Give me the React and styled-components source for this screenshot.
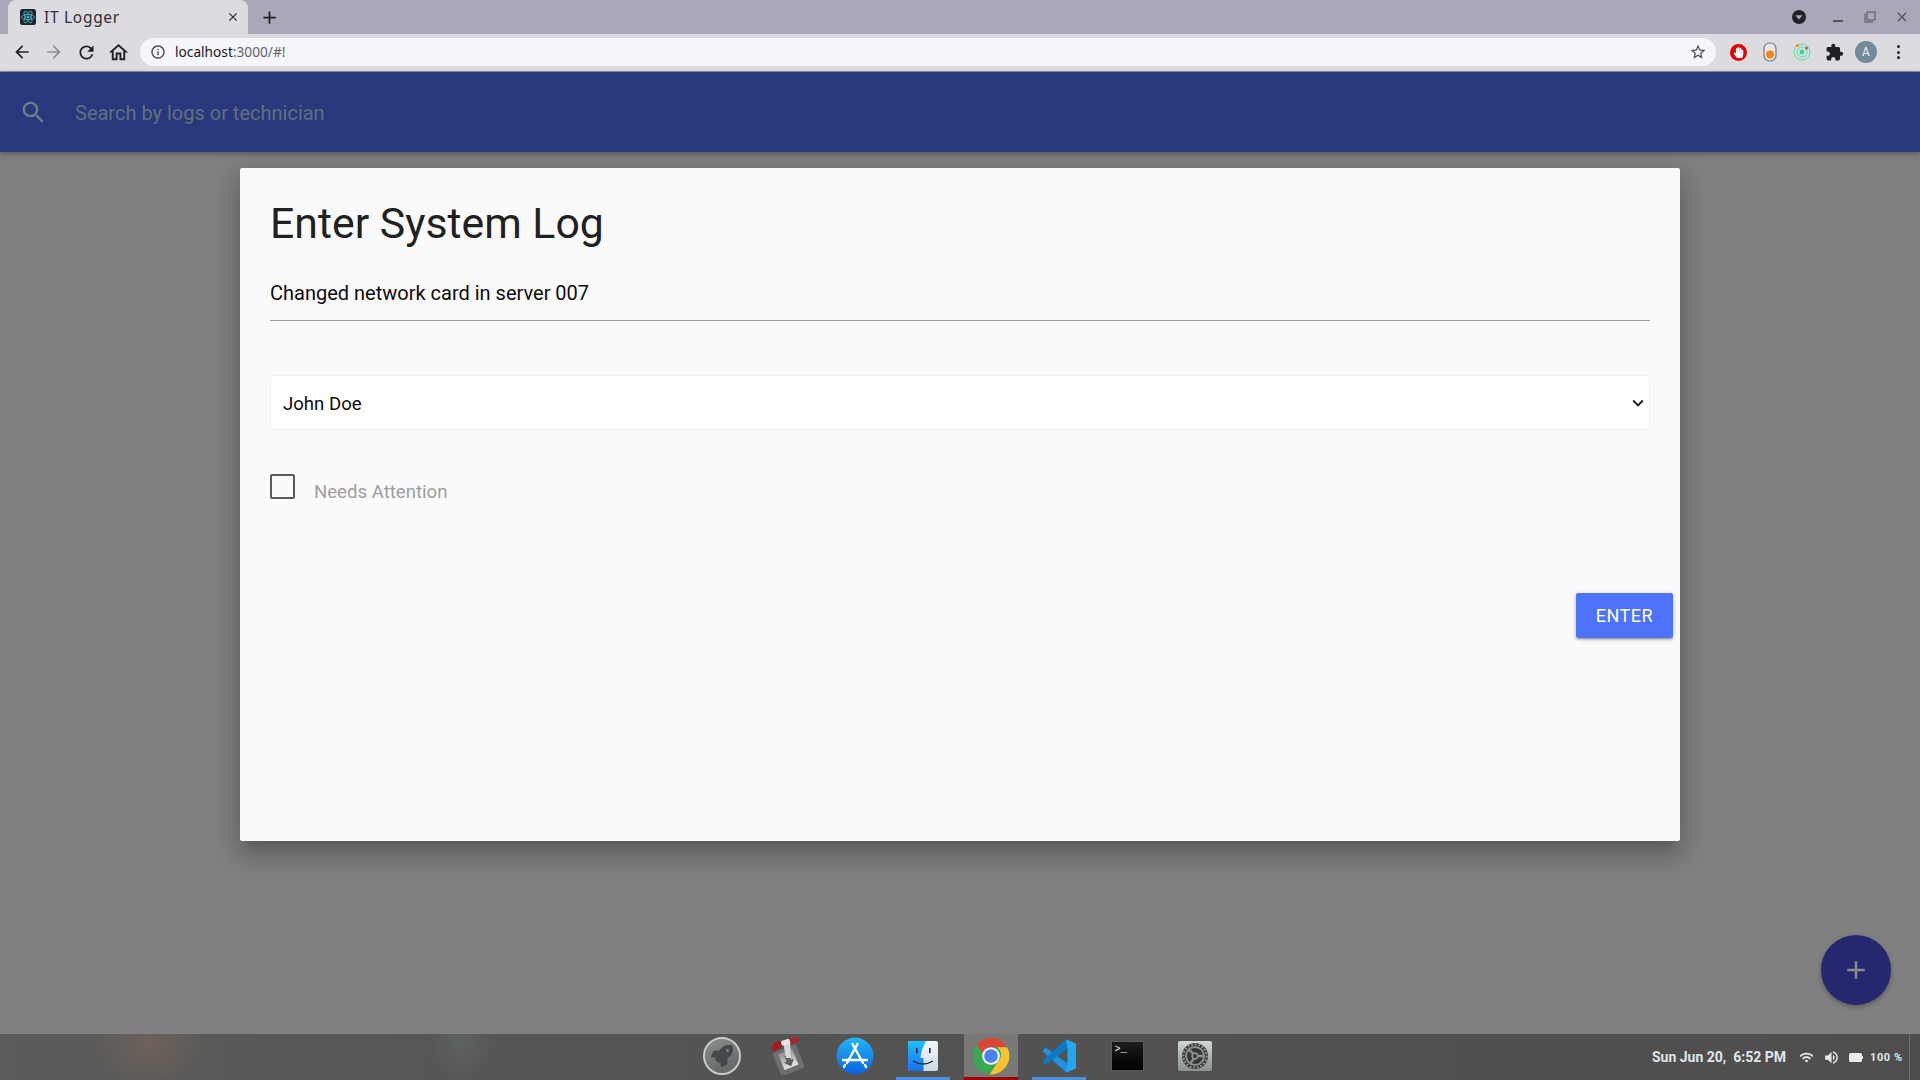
import React from 'react'
import styled, { createGlobalStyle } from 'styled-components'
import {
    MdArrowBack, MdArrowForward, MdRefresh, MdOutlineHome, MdInfoOutline, MdStarBorder,
    MdExtension, MdSearch, MdAdd, MdClose, MdKeyboardArrowDown,
    MdFilterNone, MdVolumeUp, MdWifi,
} from 'react-icons/md'
import { FaHandPaper, FaRocket } from 'react-icons/fa'

const GlobalStyle = createGlobalStyle`
    html, body { margin: 0; padding: 0; height: 100%; overflow: hidden; }
    body { font-family: Roboto, "Liberation Sans", sans-serif; background: #808080; }
    * { box-sizing: border-box; }
`

const ReactFavicon = () => (
    <svg width="16" height="16" viewBox="0 0 16 16">
        <rect width="16" height="16" rx="2.5" fill="#20232a" />
        <g fill="none" stroke="#3fb8d8" strokeWidth="0.8">
            <ellipse cx="8" cy="8" rx="6.6" ry="2.6" />
            <ellipse cx="8" cy="8" rx="6.6" ry="2.6" transform="rotate(60 8 8)" />
            <ellipse cx="8" cy="8" rx="6.6" ry="2.6" transform="rotate(120 8 8)" />
        </g>
        <circle cx="8" cy="8" r="1.4" fill="#3fb8d8" />
    </svg>
)

const ProfileDot = () => (
    <svg width="14" height="14" viewBox="0 0 14 14">
        <circle cx="7" cy="7" r="7" fill="#202124" />
        <path d="M3.4 5.2h7.2L7 9.6z" fill="#a9a8b8" />
    </svg>
)

const Minimize = () => (
    <svg width="12" height="12" viewBox="0 0 12 12"><rect x="1" y="9" width="10" height="2" fill="#55555c" /></svg>
)

const ToggleExt = () => (
    <svg width="14" height="20" viewBox="0 0 14 20">
        <rect x="1" y="1" width="12" height="18" rx="5.5" fill="#e8e8e8" stroke="#77787c" strokeWidth="1.2" />
        <circle cx="7" cy="12.5" r="4" fill="#f5860f" />
    </svg>
)

const RadarExt = () => (
    <svg width="18" height="18" viewBox="0 0 18 18">
        <g fill="none" stroke="#4fe8a6" strokeWidth="1">
            <circle cx="9" cy="9" r="8" />
            <circle cx="9" cy="9" r="5" />
        </g>
        <circle cx="9" cy="9" r="2.4" fill="#2fd79a" />
        <circle cx="4.5" cy="2.5" r="1.5" fill="#f08a24" />
        <circle cx="13.5" cy="5" r="1.5" fill="#e8503a" />
    </svg>
)

const TransmissionIcon = () => (
    <svg width="33" height="38" viewBox="0 0 33 38">
        <defs>
            <linearGradient id="transInner" x1="0" y1="0" x2="0" y2="1">
                <stop offset="0" stopColor="#8f8f8f" />
                <stop offset="1" stopColor="#e6e6e6" />
            </linearGradient>
        </defs>
        <g transform="rotate(-22 17 23)">
            <rect x="5" y="11" width="25" height="25" rx="2" fill="#6f6f6f" />
            <rect x="10" y="14" width="15" height="17" fill="url(#transInner)" />
            <path d="M15 18 h5 v6 h3 l-5.5 6 l-5.5 -6 h3z" fill="#5f5f5f" />
        </g>
        <path d="M12 5 L19 4 L20 21 L15 21 Z" fill="#d6d6d6" />
        <path d="M0.5 11 Q1 6 8 4 L11 4 L13 8 L6 13 Q2 15 0.5 11z" fill="#a51a1e" />
        <path d="M18 1.5 L26 0.5 Q30 1 28 4 L20 7 Z" fill="#b81f24" />
        <rect x="10" y="3" width="9" height="5" rx="1.5" fill="#e6e6e6" transform="rotate(-16 14 5)" />
    </svg>
)

const AppStoreIcon = () => (
    <svg width="38" height="38" viewBox="0 0 38 38">
        <defs>
            <linearGradient id="appstore" x1="0" y1="0" x2="0" y2="1">
                <stop offset="0" stopColor="#23b6f7" />
                <stop offset="1" stopColor="#0c62e0" />
            </linearGradient>
        </defs>
        <circle cx="19" cy="19" r="18.5" fill="url(#appstore)" />
        <g stroke="#fff" strokeWidth="2.4" strokeLinecap="round" fill="none">
            <path d="M21.5 7 L11 26" />
            <path d="M16.5 7 L27 26" />
            <path d="M7 23 H31" />
            <path d="M9 28 L8 30" />
            <path d="M29 28 L30 30" />
        </g>
    </svg>
)

const FinderIcon = () => (
    <svg width="30" height="30" viewBox="0 0 30 30">
        <defs>
            <linearGradient id="finderBlue" x1="0" y1="0" x2="0" y2="1">
                <stop offset="0" stopColor="#1ec0fa" />
                <stop offset="1" stopColor="#1a6ff0" />
            </linearGradient>
            <linearGradient id="finderWhite" x1="0" y1="0" x2="0" y2="1">
                <stop offset="0" stopColor="#f4f7fa" />
                <stop offset="1" stopColor="#ccd8e4" />
            </linearGradient>
        </defs>
        <rect width="30" height="30" rx="2" fill="url(#finderWhite)" />
        <path d="M2 0 H18 Q13 9 12.5 17 H15.5 V30 H2 Q0 30 0 28 V2 Q0 0 2 0z" fill="url(#finderBlue)" />
        <rect x="8" y="7" width="1.6" height="5" fill="#1b2a3a" />
        <rect x="21" y="7" width="1.6" height="5" fill="#1b2a3a" />
        <path d="M5 20 Q15 26 25 20" stroke="#1b2a3a" strokeWidth="1.3" fill="none" />
    </svg>
)

const ChromeIcon = () => (
    <svg width="38" height="38" viewBox="0 0 24 24">
        <circle cx="12" cy="12" r="11.6" fill="#37a853" />
        <path d="M12 .4A11.6 11.6 0 0 1 22.1 6.4H12a5.6 5.6 0 0 0-5.3 3.8L2.9 4.9A11.6 11.6 0 0 1 12 .4z" fill="#dc4437" />
        <path d="M22.1 6.4A11.6 11.6 0 0 1 11.2 23.6l5.2-8.2a5.6 5.6 0 0 0-.7-9z" fill="#f7c42e" />
        <circle cx="12" cy="12" r="5.6" fill="#f2f2f2" />
        <circle cx="12" cy="12" r="4.3" fill="#4a84ea" />
    </svg>
)

const VsCodeIcon = () => (
    <svg width="34" height="34" viewBox="0 0 100 100">
        <path d="M72 99 L2 36 L9 24 L30 38 L76 73 Z" fill="#1c93e8" />
        <path d="M72 1 L2 64 L9 76 L30 62 L76 27 Z" fill="#0f78c6" />
        <path d="M70 1 L100 13 V87 L70 99 L75 73 V27 Z" fill="#24a6f4" />
    </svg>
)

const SettingsIcon = () => (
    <svg width="34" height="30" viewBox="0 0 34 30">
        <defs>
            <linearGradient id="settingsTile" x1="0" y1="0" x2="0" y2="1">
                <stop offset="0" stopColor="#d2d7d7" />
                <stop offset="1" stopColor="#899090" />
            </linearGradient>
        </defs>
        <rect width="34" height="30" rx="2" fill="url(#settingsTile)" />
        <circle cx="17" cy="15" r="13" fill="#333738" />
        <circle cx="17" cy="15" r="11.6" fill="none" stroke="#8d9090" strokeWidth="2" strokeDasharray="2 1.6" />
        <circle cx="17" cy="15" r="9" fill="none" stroke="#8d9090" strokeWidth="2" />
        <circle cx="17" cy="15" r="2.8" fill="#333738" stroke="#8d9090" strokeWidth="1.8" />
        <g stroke="#8d9090" strokeWidth="2.4">
            <path d="M15.4 12.6 L10 8" />
            <path d="M19.8 15 L26 15" />
            <path d="M15.8 17.6 L12 23" />
        </g>
    </svg>
)

const BatteryIcon = () => (
    <svg width="14" height="9" viewBox="0 0 14 9">
        <rect width="13" height="9" rx="1.5" fill="#e8eaee" />
        <rect x="13" y="3" width="1" height="3" fill="#e8eaee" />
    </svg>
)

const Screen = styled.div`
    width: 1920px;
    height: 1080px;
    display: flex;
    flex-direction: column;
    overflow: hidden;
`

const TabStrip = styled.div`
    height: 34px;
    background: #a9a8b8;
    display: flex;
    align-items: flex-end;
    padding-left: 8px;
`

const Tab = styled.div`
    width: 240px;
    height: 34px;
    background: #dcdbe0;
    border-radius: 8px 8px 0 0;
    display: flex;
    align-items: center;
    padding: 0 8px 0 12px;
`

const TabTitle = styled.span`
    flex: 1;
    margin-left: 8px;
    padding-bottom: 1px;
    font-family: "Noto Sans", sans-serif;
    font-size: 15.5px;
    letter-spacing: 0.7px;
    color: #303036;
`

const NewTab = styled.div`
    width: 42px;
    height: 34px;
    display: flex;
    align-items: center;
    justify-content: center;
    color: #202124;
`

const WindowControls = styled.div`
    margin-left: auto;
    height: 34px;
    display: flex;
    align-items: center;
    padding-right: 2px;
    color: #55555c;
`

const WindowButton = styled.div`
    width: 32px;
    height: 34px;
    display: flex;
    align-items: center;
    justify-content: center;
`

const ProfileSlot = styled.div`
    display: flex;
    margin-right: 16px;
`

const Toolbar = styled.div`
    height: 38px;
    background: #dcdbe0;
    border-bottom: 1px solid #8d8d98;
    display: flex;
    align-items: center;
    padding: 0 0 1px 6px;
`

const NavIcon = styled.div`
    width: 32px;
    height: 32px;
    display: flex;
    align-items: center;
    justify-content: center;
    color: ${p => (p.$muted ? '#8c8c92' : '#202124')};
`

const Omnibox = styled.div`
    width: 1576px;
    height: 28px;
    margin-left: 6px;
    border-radius: 14px;
    background: #f5f6f9;
    display: flex;
    align-items: center;
    padding: 0 9px 0 10px;
`

const Url = styled.span`
    margin-left: 9px;
    padding-bottom: 2px;
    font-family: "Noto Sans", sans-serif;
    font-size: 13.7px;
    color: #1b1b1f;
`

const UrlRest = styled.span`
    color: #5f6166;
`

const OmniStar = styled.div`
    margin-left: auto;
    display: flex;
    color: #4a4a50;
`

const Extensions = styled.div`
    display: flex;
    align-items: center;
    margin-left: 6px;
`

const ExtSlot = styled.div`
    width: 32px;
    height: 32px;
    display: flex;
    align-items: center;
    justify-content: center;
`

const OperaBadge = styled.div`
    width: 17px;
    height: 17px;
    border-radius: 50%;
    background: #e60000;
    display: flex;
    align-items: center;
    justify-content: center;
`

const Avatar = styled.div`
    width: 22px;
    height: 22px;
    border-radius: 50%;
    background: #728a9b;
    color: #f2f2f2;
    font-size: 12px;
    display: flex;
    align-items: center;
    justify-content: center;
`

const MenuDots = styled.div`
    display: flex;
    flex-direction: column;
    gap: 2.5px;
    i {
        display: block;
        width: 3px;
        height: 3px;
        border-radius: 50%;
        background: #202124;
    }
`

const Viewport = styled.div`
    flex: 1;
    position: relative;
    background: #808080;
    display: flex;
    flex-direction: column;
`

const Navbar = styled.div`
    height: 80px;
    background: #29387c;
    box-shadow: 0 2px 5px rgba(0, 0, 0, 0.3);
    display: flex;
    align-items: center;
    padding-left: 19px;
    position: relative;
    z-index: 2;
`

const SearchText = styled.span`
    margin-left: 27px;
    padding-top: 2px;
    font-size: 20px;
    color: #5f6f80;
`

const ModalArea = styled.div`
    display: flex;
    justify-content: center;
    padding-top: 16px;
`

const Modal = styled.div`
    width: 1440px;
    height: 673px;
    background: #fafafa;
    border-radius: 2px;
    box-shadow: 0 16px 24px 2px rgba(0, 0, 0, 0.14), 0 6px 30px 5px rgba(0, 0, 0, 0.12), 0 8px 10px -7px rgba(0, 0, 0, 0.2);
    display: flex;
    flex-direction: column;
    padding: 24px 30px 0;
`

const Heading = styled.h4`
    margin: 0;
    font-size: 42.8px;
    font-weight: 400;
    line-height: 62px;
    color: #212121;
`

const MessageField = styled.div`
    margin-top: 18px;
    height: 49px;
    border-bottom: 1px solid #9e9e9e;
    font-size: 20px;
    line-height: 42px;
    color: #0c0c0c;
`

const TechSelect = styled.div`
    margin-top: 54px;
    height: 55px;
    background: #fff;
    border: 1px solid #f2f2f2;
    border-radius: 2px;
    display: flex;
    align-items: center;
    justify-content: space-between;
    padding: 0 0 0 12px;
    font-size: 18.6px;
    color: #0c0c0c;
`

const SelectValue = styled.span`
    padding-top: 3px;
`

const CheckRow = styled.div`
    margin-top: 44px;
    display: flex;
    align-items: flex-start;
`

const CheckBox = styled.div`
    width: 25px;
    height: 25px;
    border: 2px solid #5a5a5a;
    border-radius: 2px;
`

const CheckLabel = styled.span`
    margin-left: 19px;
    margin-top: 6px;
    font-size: 18.6px;
    line-height: 25px;
    color: #9e9e9e;
`

const ModalFooter = styled.div`
    margin-top: 88px;
    margin-right: -23px;
    display: flex;
    justify-content: flex-end;
`

const EnterButton = styled.div`
    width: 97px;
    height: 45px;
    background: #4d73fb;
    border-radius: 2px;
    box-shadow: 0 2px 2px rgba(0, 0, 0, 0.14), 0 3px 1px -2px rgba(0, 0, 0, 0.12), 0 1px 5px rgba(0, 0, 0, 0.2);
    color: #fff;
    font-size: 18px;
    letter-spacing: 0.5px;
    display: flex;
    align-items: center;
    justify-content: center;
`

const Fab = styled.div`
    position: absolute;
    left: 1821px;
    top: 863px;
    width: 70px;
    height: 70px;
    border-radius: 50%;
    background: #25276f;
    box-shadow: 0 2px 5px rgba(0, 0, 0, 0.3);
    display: flex;
    align-items: center;
    justify-content: center;
`

const Dock = styled.div`
    height: 46px;
    background:
        radial-gradient(ellipse 60px 44px at 150px 10px, rgba(140, 108, 92, 0.42), transparent),
        radial-gradient(ellipse 32px 38px at 462px 8px, rgba(100, 108, 108, 0.5), transparent),
        linear-gradient(90deg, #5a5b5a 0%, #535351 45%, #504e4c 100%);
    display: flex;
    align-items: stretch;
    color: #e8eaee;
`

const DockSpacer = styled.div`
    width: 692px;
`

const DockIcons = styled.div`
    display: flex;
    gap: 14px;
`

const DockItem = styled.div`
    width: 54px;
    display: flex;
    align-items: center;
    justify-content: center;
    background: ${p => (p.$active ? '#787876' : 'transparent')};
    border-bottom: 3px solid ${p => p.$mark || 'transparent'};
`

const RocketCircle = styled.div`
    flex: none;
    width: 38px;
    height: 38px;
    margin-left: 6px;
    border-radius: 50%;
    background: linear-gradient(160deg, #8a8d8d, #5e6362);
    border: 2px solid #c9cbca;
    display: flex;
    align-items: center;
    justify-content: center;
`

const TerminalTile = styled.div`
    width: 33px;
    height: 30px;
    background: linear-gradient(#1c1c1c, #000);
    border: 1px solid #5a5a5a;
    color: #eee;
    font-family: "Liberation Mono", monospace;
    font-size: 10px;
    line-height: 12px;
    padding: 2px 0 0 3px;
`

const Tray = styled.div`
    margin-left: auto;
    width: 258px;
    flex: none;
    display: flex;
    align-items: center;
    gap: 9px;
    border-right: 1px solid #6e6e6e;
    margin-right: 10px;
`

const Clock = styled.span`
    font-size: 14px;
    font-weight: 700;
    margin-right: 4px;
    white-space: nowrap;
    color: #dfe6ee;
`

const BatteryText = styled.span`
    margin-left: -2px;
    font-size: 11px;
    font-weight: 700;
    letter-spacing: 0.6px;
    white-space: nowrap;
    color: #dfe6ee;
`

const dockItems = [
    { key: 'launchpad', icon: <RocketCircle><FaRocket size={22} color="#43484a" /></RocketCircle> },
    { key: 'transmission', icon: <TransmissionIcon /> },
    { key: 'appstore', icon: <AppStoreIcon /> },
    { key: 'finder', icon: <FinderIcon />, mark: '#4d90dc' },
    { key: 'chrome', icon: <ChromeIcon />, mark: '#a00000', active: true },
    { key: 'vscode', icon: <VsCodeIcon />, mark: '#4d90dc' },
    { key: 'terminal', icon: <TerminalTile>&gt;_</TerminalTile> },
    { key: 'settings', icon: <SettingsIcon /> },
]

export default function App() {
    return (
        <Screen>
            <GlobalStyle />
            <TabStrip>
                <Tab>
                    <ReactFavicon />
                    <TabTitle>IT Logger</TabTitle>
                    <MdClose size={14} color="#2a2a2e" />
                </Tab>
                <NewTab><MdAdd size={21} /></NewTab>
                <WindowControls>
                    <ProfileSlot><ProfileDot /></ProfileSlot>
                    <WindowButton><Minimize /></WindowButton>
                    <WindowButton><MdFilterNone size={12} /></WindowButton>
                    <WindowButton><MdClose size={16} /></WindowButton>
                </WindowControls>
            </TabStrip>
            <Toolbar>
                <NavIcon><MdArrowBack size={20} /></NavIcon>
                <NavIcon $muted><MdArrowForward size={20} /></NavIcon>
                <NavIcon><MdRefresh size={21} /></NavIcon>
                <NavIcon><MdOutlineHome size={23} /></NavIcon>
                <Omnibox>
                    <MdInfoOutline size={16} color="#45464a" />
                    <Url>localhost<UrlRest>:3000/#!</UrlRest></Url>
                    <OmniStar><MdStarBorder size={18} /></OmniStar>
                </Omnibox>
                <Extensions>
                    <ExtSlot><OperaBadge><FaHandPaper size={11} color="#fff" /></OperaBadge></ExtSlot>
                    <ExtSlot><ToggleExt /></ExtSlot>
                    <ExtSlot><RadarExt /></ExtSlot>
                    <ExtSlot><MdExtension size={19} color="#202124" /></ExtSlot>
                    <ExtSlot><Avatar>A</Avatar></ExtSlot>
                    <ExtSlot><MenuDots><i /><i /><i /></MenuDots></ExtSlot>
                </Extensions>
            </Toolbar>
            <Viewport>
                <Navbar>
                    <MdSearch size={29} color="#6d7f82" />
                    <SearchText>Search by logs or technician</SearchText>
                </Navbar>
                <ModalArea>
                    <Modal>
                        <Heading>Enter System Log</Heading>
                        <MessageField>Changed network card in server 007</MessageField>
                        <TechSelect>
                            <SelectValue>John Doe</SelectValue>
                            <MdKeyboardArrowDown size={22} color="#1c1c1c" />
                        </TechSelect>
                        <CheckRow>
                            <CheckBox />
                            <CheckLabel>Needs Attention</CheckLabel>
                        </CheckRow>
                        <ModalFooter>
                            <EnterButton>ENTER</EnterButton>
                        </ModalFooter>
                    </Modal>
                </ModalArea>
                <Fab><MdAdd size={30} color="#8b8b8b" /></Fab>
            </Viewport>
            <Dock>
                <DockSpacer />
                <DockIcons>
                    {dockItems.map(item => (
                        <DockItem key={item.key} $active={item.active} $mark={item.mark}>{item.icon}</DockItem>
                    ))}
                </DockIcons>
                <Tray>
                    <Clock>Sun Jun 20,&nbsp; 6:52 PM</Clock>
                    <MdWifi size={15} />
                    <MdVolumeUp size={17} />
                    <BatteryIcon />
                    <BatteryText>100 %</BatteryText>
                </Tray>
            </Dock>
        </Screen>
    )
}
